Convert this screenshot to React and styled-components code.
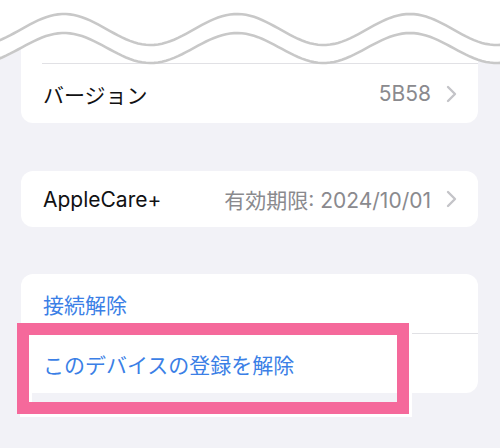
import React from "react";
import styled, { createGlobalStyle } from "styled-components";

const Global = createGlobalStyle`
  html, body { margin: 0; padding: 0; }
  body {
    background: #f2f2f7;
    font-family: "Inter", "Noto Sans CJK JP", sans-serif;
    -webkit-font-smoothing: antialiased;
  }
`;

const Page = styled.div`
  position: relative;
  width: 500px;
  height: 448px;
  overflow: hidden;
  background: #f2f2f7;
  box-sizing: border-box;
  padding: 0 22px 0 21px;
  display: flex;
  flex-direction: column;
`;

const Card = styled.div`
  background: #ffffff;
  border-radius: 12px;
  margin-top: ${(p) => p.$gap}px;
  display: flex;
  flex-direction: column;
  overflow: hidden;
`;

const Row = styled.div`
  padding-left: 21px;
  display: flex;
`;

const RowInner = styled.div`
  flex: 1;
  height: ${(p) => p.$h}px;
  box-sizing: border-box;
  display: flex;
  align-items: center;
  padding: 0 21px 0 1px;
  border-top: ${(p) => (p.$divider ? "1px solid #e1e1e5" : "none")};
`;

const Label = styled.span`
  font-family: "Inter", "Noto Sans CJK JP", sans-serif;
  font-size: 21px;
  color: ${(p) => (p.$link ? "#3b7fe6" : "#111113")};
  letter-spacing: 0;
  flex: 1;
`;

const Value = styled.span`
  font-family: "Inter", "Noto Sans CJK JP", sans-serif;
  font-size: 21px;
  color: #8a8a8e;
  margin-right: 15px;
`;

const Chevron = () => (
  <svg width="11" height="18" viewBox="0 0 11 18" style={{ display: "block" }}>
    <path d="M2 2 L9 9 L2 16" fill="none" stroke="#c4c4c8" strokeWidth="2.4" strokeLinecap="round" strokeLinejoin="round" />
  </svg>
);

const WaveLayer = styled.svg`
  position: absolute;
  top: 0;
  left: 0;
  width: 500px;
  height: 72px;
  pointer-events: none;
`;

const Highlight = styled.div`
  position: absolute;
  left: 17px;
  top: 323px;
  width: 392px;
  height: 91px;
  box-sizing: border-box;
  border: 12px solid #f5699b;
  box-shadow: 3px 3px 0 #ffffff, inset 3px 3px 0 #ffffff;
  pointer-events: none;
`;

function wavePoints(c, a) {
  const pts = [];
  for (let x = -6; x <= 506; x += 4) {
    const y = c - a * Math.cos((2 * Math.PI * (x - 64)) / 173);
    pts.push([x, y]);
  }
  return pts;
}

const Wave = () => {
  const upper = wavePoints(29.5, 15.5);
  const lower = wavePoints(48, 15);
  const line = (pts) => "M" + pts.map(([x, y]) => `${x.toFixed(1)} ${y.toFixed(2)}`).join(" L");
  const fill = line(lower) + " L506 -6 L-6 -6 Z";
  return (
    <WaveLayer viewBox="0 0 500 72">
      <path d={fill} fill="#ffffff" />
      <path d={line(upper)} fill="none" stroke="#c8c8c8" strokeWidth="2.6" />
      <path d={line(lower)} fill="none" stroke="#c8c8c8" strokeWidth="2.6" />
    </WaveLayer>
  );
};

export default function App() {
  return (
    <>
      <Global />
      <Page>
        <Card $gap={0}>
          <Row>
            <RowInner $h={63} />
          </Row>
          <Row>
            <RowInner $h={60} $divider>
              <Label>バージョン</Label>
              <Value>5B58</Value>
              <Chevron />
            </RowInner>
          </Row>
        </Card>
        <Card $gap={48}>
          <Row>
            <RowInner $h={56}>
              <Label>AppleCare+</Label>
              <Value>有効期限: 2024/10/01</Value>
              <Chevron />
            </RowInner>
          </Row>
        </Card>
        <Card $gap={47}>
          <Row>
            <RowInner $h={59}>
              <Label $link>接続解除</Label>
            </RowInner>
          </Row>
          <Row>
            <RowInner $h={60} $divider>
              <Label $link>このデバイスの登録を解除</Label>
            </RowInner>
          </Row>
        </Card>
        <Wave />
        <Highlight />
      </Page>
    </>
  );
}
